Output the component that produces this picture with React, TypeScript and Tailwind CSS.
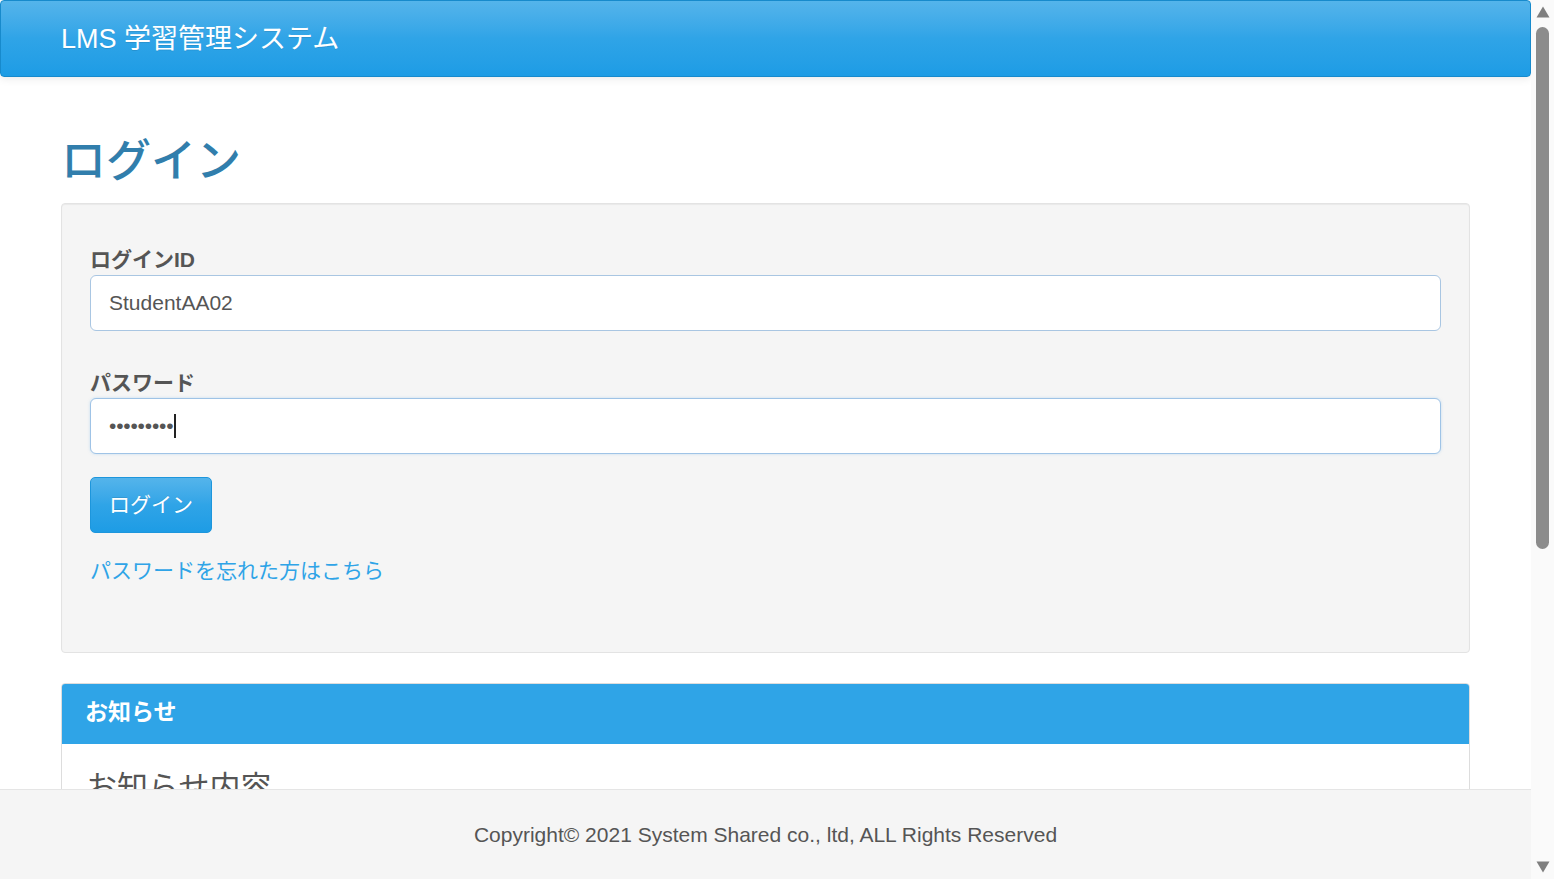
import React from "react";

const font = { fontFamily: '"Liberation Sans", "Noto Sans CJK JP", sans-serif' };

export default function App() {
  return (
    <div className="flex h-[879px] w-[1554px] overflow-hidden bg-white" style={font}>
      <div className="relative flex-1 overflow-hidden">
        {/* Navbar */}
        <header className="flex h-[77px] items-center rounded-[4px] border border-[#178acc] bg-gradient-to-b from-[#54b4eb] via-[#2fa4e7] to-[#1d9ce5] pl-[60px] shadow-[0_1px_10px_rgba(0,0,0,0.1)]">
          <span className="pt-[1px] text-[27px] leading-none text-white [text-shadow:0_1px_0_rgba(0,0,0,0.1)]">
            LMS 学習管理システム
          </span>
        </header>

        <main className="px-[61px]">
          <h2 className="mt-[60px] h-[50px] text-[45px] leading-[50px] font-medium text-[#317eac]">ログイン</h2>

          {/* Well */}
          <div className="mt-[16px] rounded-[4px] border border-[#e3e3e3] bg-[#f5f5f5] px-[28px] pt-[41px] pb-[66px] shadow-[inset_0_1px_1px_rgba(0,0,0,0.05)]">
            <div className="h-[30px] text-[21px] leading-[30px] font-bold text-[#555]">ログインID</div>
            <div className="flex h-[56px] items-center rounded-[6px] border border-[#a9c6e2] bg-white px-[18px] text-[21px] text-[#555]">
              StudentAA02
            </div>

            <div className="mt-[37px] h-[30px] text-[21px] leading-[30px] font-bold text-[#555]">パスワード</div>
            <div className="flex h-[56px] items-center rounded-[6px] border border-[#9fc3e6] bg-white px-[18px] text-[21px] text-[#555] shadow-[0_0_3px_rgba(102,175,233,0.35)]">
              <span className="tracking-[-0.2px]">•••••••••</span>
              <span className="ml-[1px] h-[24px] w-[2px] bg-[#222]" />
            </div>

            <button className="mt-[23px] flex h-[56px] w-[122px] items-center justify-center rounded-[5px] border border-[#1d96dc] bg-gradient-to-b from-[#54b4eb] via-[#2fa4e7] to-[#1d9ce5] text-[21px] text-white [text-shadow:0_-1px_0_rgba(0,0,0,0.1)]">
              ログイン
            </button>

            <a className="mt-[23px] block h-[30px] text-[21px] leading-[30px] text-[#2fa4e7]">パスワードを忘れた方はこちら</a>
          </div>

          {/* Panel */}
          <div className="mt-[30px] overflow-hidden rounded-[4px] border border-[#dddddd] bg-white">
            <div className="flex h-[60px] items-center border-b border-[#2fa4e7] bg-[#2fa4e7] px-[23px] pb-[2px] text-[23px] font-bold text-white">
              お知らせ
            </div>
            <div className="px-[24px] pt-[22px] text-[31px] leading-[44px] text-[#555]">お知らせ内容</div>
            <div className="h-[200px]" />
          </div>
        </main>

        {/* Fixed footer */}
        <footer className="absolute right-0 bottom-0 left-0 flex h-[90px] items-center justify-center border-t border-[#e5e5e5] bg-[#f5f5f5] text-[21px] text-[#555]">
          Copyright© 2021 System Shared co., ltd, ALL Rights Reserved
        </footer>
      </div>

      {/* Scrollbar */}
      <div className="flex w-[23px] flex-col items-center bg-[#fafafa] pt-[6px] pb-[6px]">
        <svg width="14" height="12" viewBox="0 0 14 12" className="shrink-0">
          <path d="M7 0.5 L13.5 11.5 L0.5 11.5 Z" fill="#7f7f7f" />
        </svg>
        <div className="mt-[9px] h-[522px] w-[13px] rounded-full bg-[#8c8c8c]" />
        <div className="flex-1" />
        <svg width="14" height="12" viewBox="0 0 14 12" className="shrink-0">
          <path d="M0.5 0.5 L13.5 0.5 L7 11.5 Z" fill="#7f7f7f" />
        </svg>
      </div>
    </div>
  );
}
